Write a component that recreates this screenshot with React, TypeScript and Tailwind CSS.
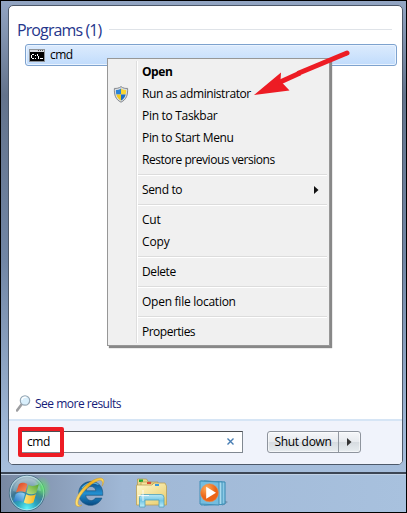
import React from 'react';

function Shield() {
  return (
    <svg width="16" height="17" viewBox="0 0 16 17">
      <path d="M8 .6C10 2.2 12.4 2.6 14.6 2.4C14.9 9 13.5 13.5 8 16.2C2.5 13.5 1.1 9 1.4 2.4C3.6 2.6 6 2.2 8 .6Z" fill="#d9dcdf" stroke="#85898e" strokeWidth="1" />
      <path d="M8 2.4C6.500 3.500 4.800 3.900 3 3.900C2.900 5.700 3 7 3.400 8.500H8Z" fill="#2b83d8" />
      <path d="M8 2.400C9.500 3.500 11.200 3.900 13 3.900C13.100 5.700 13 7 12.600 8.500H8Z" fill="#fbd630" />
      <path d="M8 8.500H3.400C4.100 11.400 5.500 13.200 8 14.600Z" fill="#f5ca1c" />
      <path d="M8 8.500H12.600C11.900 11.400 10.500 13.200 8 14.600Z" fill="#1d6fc5" />
    </svg>
  );
}

function ConsoleIcon() {
  return (
    <svg width="16" height="13" viewBox="0 0 16 13" shapeRendering="crispEdges">
      <rect width="16" height="13" fill="#8e9297" />
      <rect x="1" y="1" width="14" height="2" fill="#d5d8dc" />
      <path d="M9 1h1v1H9zM11 1h1v1h-1zM13 1h1v1h-1z" fill="#555" />
      <rect x="1" y="3" width="14" height="9" fill="#000" />
      <path d="M3 5h2v1H3zM2 6h1v3H2zM3 9h2v1H3zM6 6h1v1H6zM6 9h1v1H6zM8 5h1v2H8zM9 7h1v3H9zM11 9h3v1h-3z" fill="#fff" />
    </svg>
  );
}

function StartOrb() {
  return (
    <svg width="48" height="38" viewBox="0 0 48 38">
      <defs>
        <radialGradient id="orb" cx="50%" cy="94%" r="88%">
          <stop offset="0" stopColor="#5ff5fa" />
          <stop offset=".32" stopColor="#2aa4bd" />
          <stop offset=".62" stopColor="#3d7592" />
          <stop offset="1" stopColor="#a4bdca" />
        </radialGradient>
        <radialGradient id="glow">
          <stop offset="0" stopColor="#58ed5e" stopOpacity=".75" />
          <stop offset="1" stopColor="#58ed5e" stopOpacity="0" />
        </radialGradient>
        <linearGradient id="red" x1="0" y1="0" x2="1" y2="1"><stop stopColor="#d93d20" /><stop offset="1" stopColor="#f89a62" /></linearGradient>
        <linearGradient id="grn" x1="0" y1="1" x2="1" y2="0"><stop stopColor="#c2e288" /><stop offset="1" stopColor="#52a22c" /></linearGradient>
        <linearGradient id="blu" x1="0" y1="1" x2="1" y2="0"><stop stopColor="#1c72c3" /><stop offset="1" stopColor="#a2d9f8" /></linearGradient>
        <linearGradient id="yel"><stop stopColor="#ffe681" /><stop offset="1" stopColor="#f7b51b" /></linearGradient>
      </defs>
      <circle cx="19" cy="19" r="17.700" fill="url(#orb)" stroke="#3f687d" strokeWidth=".8" />
      <circle cx="19" cy="19" r="16.800" fill="none" stroke="#c9eaf2" strokeOpacity=".75" />
      <ellipse cx="34" cy="14" rx="9" ry="12" fill="url(#glow)" />
      <path d="M5 17C7 0 31 0 33 17C23 14 15 21 5 17Z" fill="#fff" opacity=".2" />
      <g transform="translate(-1.200 -1.500) scale(1.070)">
        <path d="M11.300 11C14 9 17 9.300 19.200 11L17.300 18.700C14.500 17 12 17.200 8.600 18.800Z" fill="url(#red)" />
        <path d="M20.300 11.400C23.300 13.200 26 12.700 30 10.900L27.500 19.200C24.500 20.800 21.400 20.900 18.400 19.100Z" fill="url(#grn)" />
        <path d="M8.300 20C11.500 18.300 14.300 18.300 17 19.900L14.900 27.700C12.200 26.100 9.400 26.300 6.200 27.700Z" fill="url(#blu)" />
        <path d="M18.100 20.300C21 22.100 24.200 21.900 27.200 20.300L24.900 28C21.800 29.700 18.900 29.600 15.900 28Z" fill="url(#yel)" />
      </g>
    </svg>
  );
}

function Explorer() {
  return (
    <svg width="32" height="32" viewBox="0 0 34 34">
      <defs>
        <linearGradient id="ie" x1="0" y1="0" x2="0" y2="1"><stop stopColor="#0b4c86" /><stop offset=".5" stopColor="#238fd0" /><stop offset="1" stopColor="#074a82" /></linearGradient>
        <linearGradient id="gold"><stop stopColor="#ffe37b" /><stop offset=".5" stopColor="#efae19" /><stop offset="1" stopColor="#ffdb58" /></linearGradient>
      </defs>
      <path fillRule="evenodd" d="M30.500 19.500H12.500C13 25.600 20.600 26.800 22.700 22.400H29.700C23.700 35.200 4.600 31.200 5 17.100C5.300 1.200 29.700 .2 30.500 16.300ZM12.700 14.600H23.200C22.300 8.600 14 8.500 12.700 14.600Z" fill="url(#ie)" stroke="#164f78" strokeWidth=".6" />
      <path d="M8.500 12C12.500 6.300 20.500 4.500 26 8" fill="none" stroke="#74cbed" strokeWidth="1.200" opacity=".75" />
      <path d="M8.500 29.700C4.400 33 0 31.400 2 24.300C5.300 13.300 19.300 1.300 27.500 1C32.500 .8 32.800 5.700 29.800 9.700C31.400 4.800 29.500 2.500 25.500 3.900C17 7 5.700 19.100 4.400 25.600C3.600 29.600 5.300 31 8.500 29.700Z" fill="url(#gold)" stroke="#c58b19" strokeWidth=".4" />
    </svg>
  );
}

function Folder() {
  return (
    <svg width="34" height="31" viewBox="0 0 34 31">
      <defs>
        <linearGradient id="fold" x1="0" y1="0" x2="1" y2="1"><stop stopColor="#fffad0" /><stop offset="1" stopColor="#e8cb69" /></linearGradient>
        <linearGradient id="stand" x1="0" y1="0" x2="0" y2="1"><stop stopColor="#b9e8f5" /><stop offset=".5" stopColor="#72c5e3" /><stop offset="1" stopColor="#c2f0fa" /></linearGradient>
      </defs>
      <path d="M2.500 1h9l2 3H23v18H2.500Z" fill="#ead78c" stroke="#af974d" strokeWidth=".7" />
      <rect x="4" y="1.500" width="4" height="2.500" fill="#1cab35" />
      <path d="M6 4h10l2 3h11v18H6Z" fill="#f6e39a" stroke="#b69b4f" strokeWidth=".7" />
      <rect x="12" y="4" width="4" height="2" fill="#dc4a32" />
      <path d="M1.500 7H17l2-2h11l1.500 3v19h-30Z" fill="url(#fold)" stroke="#baa056" strokeWidth=".8" />
      <rect x="20" y="6" width="4" height="2" fill="#3b9add" />
      <path d="M8 16.500h18q3 0 3 3v9.500h-5V22H10v7H4.500v-9.500q0-3 3.500-3Z" fill="url(#stand)" stroke="#4c9fbd" strokeWidth=".8" />
      <path d="M8 12v11M3 17.500h11" stroke="#fff" strokeWidth=".8" />
    </svg>
  );
}

function Player() {
  return (
    <svg width="30" height="27" viewBox="0 0 30 27">
      <defs><radialGradient id="orange" cx="35%" cy="25%"><stop stopColor="#ffae59" /><stop offset="1" stopColor="#ec6518" /></radialGradient></defs>
      <path d="M25 20L29 22L23 26Z" fill="#52748b" opacity=".5" />
      <path d="M5 1L26 2V24L5 25Z" fill="#8bc9e6" stroke="#3588b2" />
      <path d="M2 1L23 2V24.500L2 25Z" fill="#a9dbef" stroke="#3e91b8" />
      <path d="M1 1L20 2V25L1 24Z" fill="#74bddf" stroke="#418eb7" />
      <circle cx="10.500" cy="12.800" r="9" fill="url(#orange)" stroke="#ee9150" strokeWidth=".5" />
      <path d="M7.200 6.700L17 12.700L7.200 18.800Z" fill="#fff" />
    </svg>
  );
}

function Item({ children, tracking = 'tracking-[-0.24px]', icon, arrow }: { children: string; tracking?: string; icon?: React.ReactNode; arrow?: boolean }) {
  return (
    <div className={`flex h-[22px] items-center ${tracking}`}>
      <div className="flex w-[34px] shrink-0 pl-[5px]">{icon}</div>
      <span>{children}</span>
      {arrow && <svg className="mr-[10px] ml-auto" width="5" height="8"><path d="M0 0L4.500 4L0 8Z" fill="#111" /></svg>}
    </div>
  );
}

function Separator() {
  return <div className="flex h-2 items-center"><div className="mr-[2px] ml-[30px] h-[2px] flex-1 border-t border-[#dcdcdc] bg-white" /></div>;
}

function ContextMenu() {
  return (
    <div className="absolute top-[58px] left-[107px] h-[288px] w-[223px] border border-[#979797] bg-[#f0f0f0] py-[2px] shadow-[2px_2px_1px_#888]">
      <div className="absolute inset-y-[2px] left-[28px] w-[2px] border-l border-[#dedede] bg-white" />
      <Item tracking="font-bold tracking-[-0.45px]">Open</Item>
      <Item icon={<Shield />} tracking="tracking-[-0.42px]">Run as administrator</Item>
      <Item tracking="tracking-[-0.3px]">Pin to Taskbar</Item>
      <Item tracking="tracking-[-0.34px]">Pin to Start Menu</Item>
      <Item tracking="tracking-[-0.46px]">Restore previous versions</Item>
      <Separator />
      <Item arrow tracking="tracking-[-0.35px]">Send to</Item>
      <Separator />
      <Item>Cut</Item>
      <Item tracking="tracking-[-0.1px]">Copy</Item>
      <Separator />
      <Item tracking="tracking-[-0.4px]">Delete</Item>
      <Separator />
      <Item tracking="tracking-[-0.26px]">Open file location</Item>
      <Separator />
      <Item tracking="tracking-[-0.5px]">Properties</Item>
    </div>
  );
}

export default function App() {
  return (
    <div className="relative h-[513px] w-[407px] overflow-hidden bg-black p-px font-['Open_Sans','Noto_Sans',sans-serif] text-[12px] leading-[16px] tracking-[-0.24px] text-black">
      <div className="flex h-[471px] w-[405px] flex-col bg-[linear-gradient(#92a5c3,#63738c_20%,#7186a5_55%,#9db5d4_90%,#a6bedc)] pt-[4px] pr-[3px] pb-[7px] pl-[7px]">
        <div className="flex flex-1 flex-col overflow-hidden rounded-[5px] border border-[#4d596a] bg-white">
          <div className="flex h-[38px] shrink-0 items-center pt-[9px] pl-[8px] text-[16px] leading-5 tracking-[-0.9px] text-[#26368c]">
            <span className="whitespace-nowrap">Programs (1)</span>
            <div className="mr-[10px] ml-[8px] h-px flex-1 bg-[#dfe3e8]" />
          </div>
          <div className="mr-[5px] ml-[16px] flex h-[22px] items-center gap-[5px] rounded-[3px] border border-[#7da2ce] bg-gradient-to-b from-[#dcebfd] to-[#c1dcfc] pl-[3px] tracking-[-0.5px] shadow-[inset_0_0_0_1px_#e9f3ff]">
            <ConsoleIcon /><span>cmd</span>
          </div>
          <div className="mt-auto flex h-[31px] shrink-0 items-center gap-[4px] pl-[7px] tracking-[-0.5px] text-[#151c79]">
            <svg width="15" height="17" viewBox="0 0 15 17">
              <path d="M5.500 9.500L1 15.500" stroke="#9c9da0" strokeWidth="2.500" strokeLinecap="round" />
              <circle cx="9" cy="5.500" r="4.700" fill="#d9effc" stroke="#96a7b4" strokeWidth="1.200" />
              <path d="M5.800 5C6.500 2.500 8.500 1.900 10.500 2.300" fill="none" stroke="#fff" strokeWidth="1.200" />
            </svg>
            <span>See more results</span>
          </div>
          <div className="flex h-[45px] shrink-0 items-center border-t-2 border-[#d6e5f5] bg-[#f0f3fb] pb-[2px] pl-[10px]">
            <div className="relative flex h-[22px] w-[224px] shrink-0 items-center border border-[#808891] border-t-[#4b4e52] bg-white pl-[7px] tracking-[-0.4px]">
              <span>cmd</span>
              <svg className="mr-[7px] ml-auto" width="9" height="9"><path d="M1.500 1.500L7.500 7.500M7.500 1.500L1.500 7.500" stroke="#477db3" strokeWidth="1.400" /></svg>
              <div className="absolute top-[-5px] left-[-2px] h-[30px] w-[46px] rounded-[2px] border-4 border-[#ed1c24]" />
            </div>
            <div className="ml-[24px] flex h-[22px] w-[94px] shrink-0 rounded-[3px] border border-[#8e949d] bg-[linear-gradient(#f5f7f9,#e7eaee_48%,#d6dbe0_50%,#e8edf0)] tracking-[-0.3px] shadow-[inset_0_0_0_1px_#fff8]">
              <span className="flex w-[71px] items-center justify-center border-r border-[#9298a0]">Shut down</span>
              <span className="flex flex-1 items-center justify-center"><svg width="5" height="8"><path d="M0 0L4.500 4L0 8Z" fill="#333" /></svg></span>
            </div>
          </div>
        </div>
      </div>
      <div className="flex h-[40px] w-[405px] items-center border-t-2 border-[#3c4655] bg-[linear-gradient(90deg,#7888a2,#a0b8d6_30%,#a8c1de)] shadow-[inset_0_1px_#c1d2e6]">
        <div className="w-[71px] pl-[7px]"><StartOrb /></div>
        <div className="w-[63px] pl-[2px]"><Explorer /></div>
        <div className="w-[64px]"><Folder /></div>
        <Player />
      </div>
      <ContextMenu />
      <svg className="absolute top-[46px] left-[250px]" width="104" height="55" viewBox="0 0 104 55">
        <path d="M49 27L97 7" stroke="#ed1c24" strokeWidth="5" strokeLinecap="round" />
        <path d="M4 49L31 26.500L30.500 35L39.500 44.500Z" fill="#ed1c24" />
        <path d="M28 37L50 27" stroke="#ed1c24" strokeWidth="5" />
      </svg>
    </div>
  );
}
